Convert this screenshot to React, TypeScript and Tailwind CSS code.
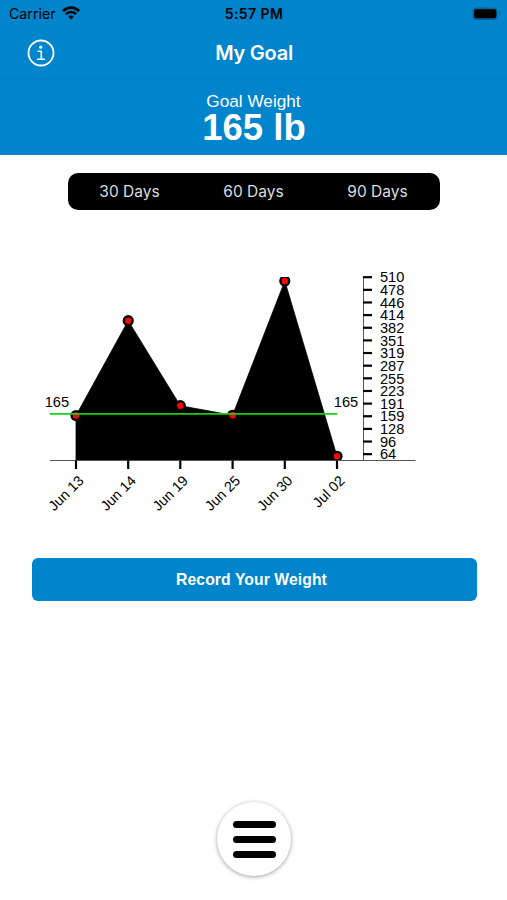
import { useState } from "react";

interface Point {
  date: string;
  x: number;
  y: number;
}

const ranges = ["30 Days", "60 Days", "90 Days"];

const points: Point[] = [
  { date: "Jun 13", x: 36, y: 155.5 },
  { date: "Jun 14", x: 88.2, y: 60.7 },
  { date: "Jun 19", x: 140.3, y: 145.7 },
  { date: "Jun 25", x: 192.6, y: 155.3 },
  { date: "Jun 30", x: 244.8, y: 21 },
  { date: "Jul 02", x: 297, y: 196.3 },
];

const weights = [
  510, 478, 446, 414, 382, 351, 319, 287, 255, 223, 191, 159, 128, 96, 64,
];

const BASELINE = 200.5;
const GOAL_Y = 153.8;

function WifiIcon() {
  return (
    <svg width="18" height="14" viewBox="0 0 18 14" fill="none" stroke="#000">
      <path d="M0.9 5.1C5.4 0.4 12.6 0.4 17.1 5.1" strokeWidth="2.7" />
      <path d="M3.8 8.2C6.7 5.2 11.3 5.2 14.2 8.2" strokeWidth="2.6" />
      <path d="M9 13.4L6.2 10.5C7.8 9 10.2 9 11.8 10.5Z" fill="#000" stroke="none" />
    </svg>
  );
}

function BatteryIcon() {
  return (
    <svg width="30" height="14" viewBox="0 0 30 14">
      <rect x="0.5" y="0.5" width="25" height="12.5" rx="4" fill="#00669d" />
      <rect x="2" y="2.3" width="22.3" height="9" rx="2.4" fill="#000" />
      <path d="M27.2 5.2C29 5.8 29 7.8 27.2 8.4Z" fill="#00669d" />
    </svg>
  );
}

function InfoIcon() {
  return (
    <svg width="28" height="28" viewBox="0 0 28 28" fill="none" stroke="#fff">
      <circle cx="14" cy="14" r="12.5" strokeWidth="1.8" />
      <circle cx="13.7" cy="8.2" r="1.6" fill="#fff" stroke="none" />
      <path
        d="M11.2 12.2H14.3V20.2M10.6 20.2H17.4"
        strokeWidth="1.6"
        strokeLinecap="round"
        strokeLinejoin="round"
      />
    </svg>
  );
}

function WeightChart() {
  const line = points.map((p) => `${p.x},${p.y}`).join(" ");
  const first = points[0];
  const last = points[points.length - 1];

  return (
    <svg
      width="384"
      height="260"
      viewBox="0 0 384 260"
      className="ml-10 block font-['Liberation_Sans',sans-serif] text-[14.6px]"
    >
      <clipPath id="plot">
        <rect x="0" y="17" width="384" height="183.5" />
      </clipPath>
      <g clipPath="url(#plot)">
        <polygon
          points={`${first.x},${BASELINE} ${line} ${last.x},${BASELINE}`}
          stroke="#000"
          strokeWidth="0.8"
        />
        {points.map((p) => (
          <g key={p.date}>
            <circle cx={p.x} cy={p.y} r="5.6" />
            <circle cx={p.x} cy={p.y} r="3.2" fill="#f80505" />
          </g>
        ))}
      </g>
      <path d={`M10 ${GOAL_Y}H297`} stroke="#16d016" strokeWidth="1.8" />
      <text x="4.7" y="146.6">165</text>
      <text x="293.8" y="146.6">165</text>

      <path d={`M10 ${BASELINE}H375.5`} stroke="#555" strokeWidth="1" />
      {points.map((p) => (
        <g key={p.date}>
          <path d={`M${p.x} 200.5V209`} stroke="#000" strokeWidth="2.2" />
          <text
            transform={`translate(${p.x + 8.6} 221.5) rotate(-45)`}
            textAnchor="end"
            className="text-[14.3px]"
          >
            {p.date}
          </text>
        </g>
      ))}

      <path d="M323.5 17V200.5" stroke="#555" strokeWidth="1" />
      {weights.map((weight, i) => {
        const y = 17.2 + i * 12.64;
        return (
          <g key={weight}>
            <path d={`M323 ${y}H332`} stroke="#000" strokeWidth="2.2" />
            <text x="340" y={y + 5.2}>
              {weight}
            </text>
          </g>
        );
      })}
    </svg>
  );
}

function App() {
  const [range, setRange] = useState("");

  return (
    <div className="flex h-[900px] w-[507px] flex-col bg-white font-[Inter,sans-serif]">
      <header className="h-[79px] border-b border-[#007bbf] bg-[#0084cc]">
        <div className="grid h-[27px] grid-cols-[1fr_auto_1fr] items-center pl-[9px] pr-[5px] text-black">
          <div className="flex items-center gap-[6px] text-[14.2px]">
            <span>Carrier</span>
            <WifiIcon />
          </div>
          <span className="-ml-[3px] text-center text-[14px] font-semibold tracking-[0.4px]">
            5:57 PM
          </span>
          <div className="flex justify-end">
            <BatteryIcon />
          </div>
        </div>
        <div className="grid h-[51px] grid-cols-3 items-center px-[27px]">
          <button aria-label="Info" className="w-7">
            <InfoIcon />
          </button>
          <h1 className="pl-px text-center text-[20px] font-semibold tracking-[-0.25px] text-white">
            My Goal
          </h1>
        </div>
      </header>

      <section className="flex h-[76px] flex-col items-center bg-[#0084cc] pt-3 font-['Liberation_Sans',sans-serif] text-white">
        <p className="text-[17.2px] leading-5">Goal Weight</p>
        <p className="pl-px text-[36.5px] leading-[34px] font-bold">165 lb</p>
      </section>

      <div className="mt-[18px] ml-[68px] grid h-[37px] w-[372px] shrink-0 grid-cols-3 rounded-[10px] bg-black">
        {ranges.map((item) => (
          <button
            key={item}
            onClick={() => setRange(item)}
            className={`pr-px text-[15.5px] ${
              item === range ? "text-white" : "text-[#dedede]"
            }`}
          >
            {item}
          </button>
        ))}
      </div>

      <div className="mt-[50px] shrink-0">
        <WeightChart />
      </div>

      <button className="mr-[30.5px] ml-[31.5px] mt-[38px] h-[43px] shrink-0 rounded-md bg-[#0084cc] pr-[5px] font-['Liberation_Sans',sans-serif] text-[15.7px] font-bold tracking-[0.1px] text-white">
        Record Your Weight
      </button>

      <button
        aria-label="Menu"
        className="mx-auto mt-auto mb-6 flex size-[74px] shrink-0 flex-col items-center justify-center gap-2 rounded-full bg-white pl-px shadow-[0_1px_4px_rgba(0,0,0,0.38)]"
      >
        <span className="h-[7px] w-[43px] rounded-full bg-black" />
        <span className="h-[7px] w-[43px] rounded-full bg-black" />
        <span className="h-[7px] w-[43px] rounded-full bg-black" />
      </button>
    </div>
  );
}

export default App;
